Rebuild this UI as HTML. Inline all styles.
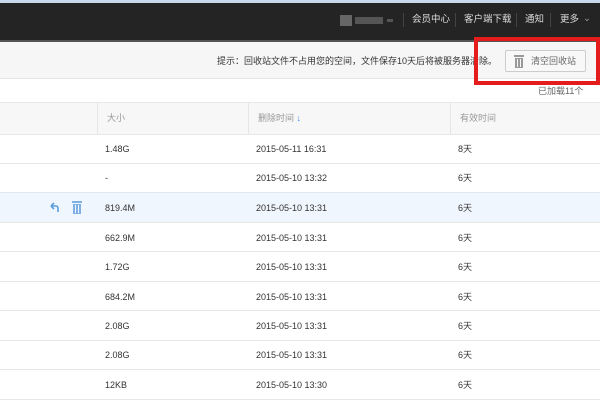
<html><head><style>
body{margin:0;width:600px;height:403px;overflow:hidden;background:#fff;font-family:"Liberation Sans","Noto Sans CJK SC",sans-serif;font-size:9px;color:#333;position:relative}
.a{position:absolute;white-space:nowrap;line-height:12px}
.top{position:absolute;left:0;top:0;width:600px;height:3px;background:#c8d8ea}
.bar{position:absolute;left:0;top:3px;width:600px;height:37px;background:#242424;border-bottom:2px solid #555}
.nav{color:#ddd;font-size:9.5px}
.sep{position:absolute;top:13px;width:1px;height:14px;background:#444}
.tool{position:absolute;left:0;top:42px;width:600px;height:36px;background:#f6f6f6;border-bottom:1px solid #e4e4e4}
.hdr{position:absolute;left:0;top:102px;width:600px;height:31px;background:#f7f7f7;border-top:1px solid #e8e8e8;border-bottom:1px solid #e8e8e8}
.row{position:absolute;left:0;width:600px;height:29px;border-bottom:1px solid #e6e6e6}
.vl{position:absolute;top:102px;width:1px;height:32px;background:#e6e6e6}
</style></head><body>
<div class="top"></div>
<div class="bar">
<div class="a" style="left:340px;top:12px;width:12px;height:11px;background:#666"></div>
<div class="a" style="left:355px;top:14px;width:28px;height:7px;background:#555"></div>
<div class="a" style="left:387px;top:16px;width:6px;height:3px;background:#555"></div>
<div class="sep" style="left:403px;top:10px"></div>
<div class="a nav" style="left:412px;top:11px">会员中心</div>
<div class="sep" style="left:455px;top:10px"></div>
<div class="a nav" style="left:464px;top:11px">客户端下载</div>
<div class="sep" style="left:516px;top:10px"></div>
<div class="a nav" style="left:525px;top:11px">通知</div>
<div class="sep" style="left:550px;top:10px"></div>
<div class="a nav" style="left:560px;top:11px">更多</div>
<div class="a nav" style="left:583px;top:10px;color:#999">⌄</div>
</div>
<div class="tool">
<div class="a" style="left:217px;top:13px;color:#333">提示：回收站文件不占用您的空间，文件保存10天后将被服务器清除。</div>
<div class="a" style="left:505px;top:8px;width:79px;height:20px;background:#f8f8f8;border:1px solid #ccc;border-radius:2px"></div>
<svg class="a" style="left:513px;top:12px" width="12" height="14" viewBox="0 0 12 14"><rect x="1" y="1" width="10" height="2" fill="#999"/><rect x="2" y="4" width="8" height="10" fill="#999"/><rect x="4" y="5" width="1" height="8" fill="#f8f8f8"/><rect x="7" y="5" width="1" height="8" fill="#f8f8f8"/></svg>
<div class="a" style="left:531px;top:13px;color:#666">清空回收站</div>
</div>
<div class="a" style="left:474px;top:37px;width:118px;height:40px;border:4px solid #e51c1c"></div>
<div class="a" style="left:538px;top:85px;color:#666">已加载11个</div>
<div class="hdr"></div>
<div class="vl" style="left:97px"></div><div class="vl" style="left:248px"></div><div class="vl" style="left:450px"></div>
<div class="a" style="left:107px;top:112px;color:#999">大小</div>
<div class="a" style="left:258px;top:112px;color:#999">删除时间 <span style="color:#3a8ee6">↓</span></div>
<div class="a" style="left:460px;top:112px;color:#999">有效时间</div>
<div class="row" style="top:134px"></div>
<div class="row" style="top:163px"></div>
<div class="row" style="top:192px;background:#f0f6fd;border-top:1px solid #e0e8f0"></div>
<div class="row" style="top:222px"></div>
<div class="row" style="top:252px"></div>
<div class="row" style="top:281px"></div>
<div class="row" style="top:311px"></div>
<div class="row" style="top:340px"></div>
<div class="row" style="top:370px"></div>
<svg class="a" style="left:50px;top:202px" width="10" height="11" viewBox="0 0 10 11"><path d="M1 4 L4 1 M1 4 L4 7 M1 4 H6 Q8 4 8 6.5 V10" stroke="#5a9ee0" stroke-width="1.6" fill="none"/></svg>
<svg class="a" style="left:72px;top:201px" width="10" height="13" viewBox="0 0 10 13"><rect x="0" y="0" width="10" height="2" fill="#7eb0e6"/><rect x="1" y="3" width="8" height="10" fill="#7eb0e6"/><rect x="3" y="4" width="1" height="8" fill="#f0f6fd"/><rect x="6" y="4" width="1" height="8" fill="#f0f6fd"/></svg>
<div class="a" style="left:105px;top:143px">1.48G</div><div class="a" style="left:256px;top:143px">2015-05-11 16:31</div><div class="a" style="left:458px;top:143px">8天</div>
<div class="a" style="left:105px;top:172px">-</div><div class="a" style="left:256px;top:172px">2015-05-10 13:32</div><div class="a" style="left:458px;top:172px">6天</div>
<div class="a" style="left:105px;top:202px">819.4M</div><div class="a" style="left:256px;top:202px">2015-05-10 13:31</div><div class="a" style="left:458px;top:202px">6天</div>
<div class="a" style="left:105px;top:232px">662.9M</div><div class="a" style="left:256px;top:232px">2015-05-10 13:31</div><div class="a" style="left:458px;top:232px">6天</div>
<div class="a" style="left:105px;top:261px">1.72G</div><div class="a" style="left:256px;top:261px">2015-05-10 13:31</div><div class="a" style="left:458px;top:261px">6天</div>
<div class="a" style="left:105px;top:291px">684.2M</div><div class="a" style="left:256px;top:291px">2015-05-10 13:31</div><div class="a" style="left:458px;top:291px">6天</div>
<div class="a" style="left:105px;top:320px">2.08G</div><div class="a" style="left:256px;top:320px">2015-05-10 13:31</div><div class="a" style="left:458px;top:320px">6天</div>
<div class="a" style="left:105px;top:349px">2.08G</div><div class="a" style="left:256px;top:349px">2015-05-10 13:31</div><div class="a" style="left:458px;top:349px">6天</div>
<div class="a" style="left:105px;top:379px">12KB</div><div class="a" style="left:256px;top:379px">2015-05-10 13:30</div><div class="a" style="left:458px;top:379px">6天</div>
</body></html>
